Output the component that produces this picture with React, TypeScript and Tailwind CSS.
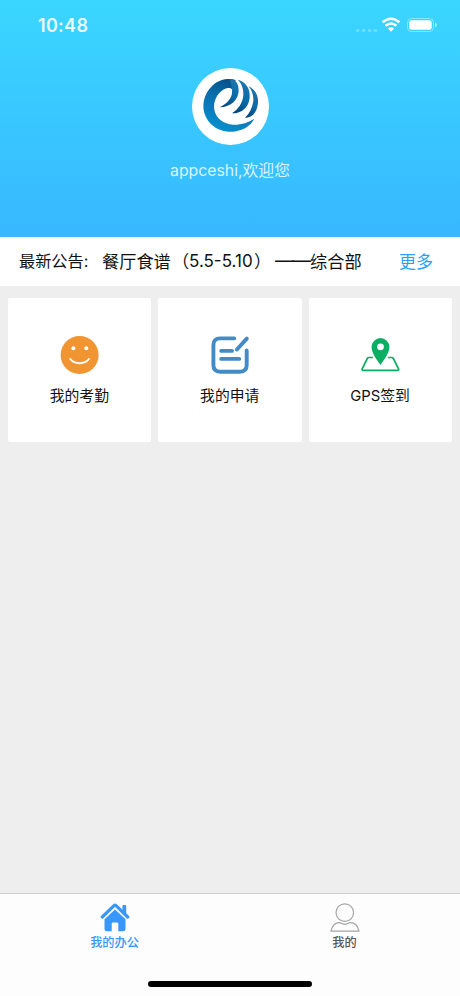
import type { ReactNode } from 'react';

function Logo() {
  return (
    <svg className="mt-[18px] h-[77px] w-[77px]" viewBox="35 23 231 231">
      <defs>
        <linearGradient id="swirl" x1="0.7" y1="0" x2="0.3" y2="1">
          <stop offset="0" stopColor="#064b82" />
          <stop offset="0.45" stopColor="#086fae" />
          <stop offset="1" stopColor="#0a91cf" />
        </linearGradient>
        <linearGradient id="feather" x1="0.6" y1="0" x2="0.3" y2="1">
          <stop offset="0" stopColor="#1c76ad" />
          <stop offset="0.55" stopColor="#0a6ba8" />
          <stop offset="1" stopColor="#064779" />
        </linearGradient>
      </defs>
      <circle cx="150.5" cy="138.5" r="115.5" fill="#fff" />
      <path
        d="M166 59C147 53 117 56 96 76C70 100 61 139 77 171C92 201 124 217 157 214C187 211 211 197 222 175C204 187 181 194 158 193C130 190 107 175 102 148C98 124 110 99 131 87C141 82 150 82 155 87Z"
        fill="url(#swirl)"
      />
      <path d="M148 56C168 58 175 71 175 91C174 118 153 139 118 141C138 131 153 116 155 98C157 84 152 70 148 56Z" fill="url(#feather)" />
      <path d="M172 58C198 65 210 86 208 112C205 140 186 159 155 159C175 146 187 127 189 105C190 85 184 69 172 58Z" fill="url(#feather)" />
      <path d="M205 78C226 88 237 110 232 134C228 159 213 174 194 172C208 159 216 142 219 122C220 105 214 89 205 78Z" fill="url(#feather)" />
    </svg>
  );
}

function StatusBar() {
  return (
    <div className="flex h-[50px] w-full items-center justify-between pl-[38px] pr-[23px]">
      <span className="font-['Inter'] text-[18px] font-semibold tracking-[0.3px] text-[#e9fbff]">10:48</span>
      <svg className="h-[16px] w-[83px]" viewBox="0 0 83 16">
        <g fill="#fff" opacity="0.25">
          <rect x="2" y="12" width="3.4" height="3" rx="1" />
          <rect x="8" y="12" width="3.4" height="3" rx="1" />
          <rect x="14" y="12" width="3.4" height="3" rx="1" />
          <rect x="19.6" y="12" width="3.4" height="3" rx="1" />
        </g>
        <g fill="none" stroke="#fff" strokeWidth="2.5">
          <path d="M28.6 5.3Q37 -1.9 45.4 5.3" />
          <path d="M31.6 8.8Q37 4.2 42.4 8.8" />
        </g>
        <path d="M34 11.4Q37 8.9 40 11.4L37 14.8Z" fill="#fff" />
        <rect x="53.5" y="1.5" width="26" height="13" rx="4" fill="none" stroke="#fff" opacity="0.4" />
        <rect x="55.3" y="3.3" width="22.4" height="9.4" rx="2.3" fill="#fff" />
        <path d="M81 5.5Q83 6.2 83 8Q83 9.8 81 10.5Z" fill="#fff" opacity="0.5" />
      </svg>
    </div>
  );
}

function SmileIcon() {
  return (
    <svg className="h-[40px] w-[40px]" viewBox="0 0 40 40">
      <circle cx="19.6" cy="20" r="19" fill="#f19532" />
      <circle cx="13.4" cy="13.2" r="2" fill="#fff" />
      <circle cx="26.3" cy="13.2" r="2" fill="#fff" />
      <path d="M10.3 24C14.6 29.6 24.6 29.6 28.9 24" fill="none" stroke="#fff" strokeWidth="2" strokeLinecap="round" />
    </svg>
  );
}

function FormIcon() {
  return (
    <svg className="h-[40px] w-[40px]" viewBox="0 0 40 40" fill="none" stroke="#438bc7" strokeWidth="3.9" strokeLinecap="round">
      <path d="M24.2 3.4H10Q3.4 3.4 3.4 10V30Q3.4 36.7 10 36.7H30Q36.7 36.7 36.7 30V15.5" />
      <path d="M11.2 15.9H22M11.2 23.9H29.2M26.9 14.5L36.8 3.6" />
    </svg>
  );
}

function PinIcon() {
  return (
    <svg className="h-[40px] w-[40px]" viewBox="0 0 40 40">
      <path d="M12.9 22.5H9Q7.8 22.5 7.3 23.5L2.2 33.8Q1.6 35.3 3.2 35.3H37.4Q39.2 35.3 38.5 33.8L33.4 23.5Q32.9 22.5 31.7 22.5H27.9" fill="none" stroke="#0bae62" strokeWidth="1.7" />
      <path d="M20.4 30C17.7 25.8 11.6 18.8 11.6 12A8.9 8.9 0 0 1 29.4 12C29.4 18.8 23.1 25.8 20.4 30Z" fill="#0bae62" />
      <circle cx="20.5" cy="11.8" r="3.4" fill="#fff" />
    </svg>
  );
}

function HomeIcon() {
  return (
    <svg className="h-[29px] w-[30px]" viewBox="0 0 30 29" fill="#3797fa">
      <path d="M22.4 3Q22.4 2 23.4 2H25.2Q26.2 2 26.2 3V13L22.4 10Z" />
      <path d="M2.3 14L14 2.7Q15 1.8 16 2.7L27.7 14" fill="none" stroke="#3797fa" strokeWidth="3.2" strokeLinecap="round" />
      <path d="M4.5 16.3L15 6.6L25.5 16.3V26Q25.5 28.3 23.2 28.3H18.3V20.5Q18.3 19.4 17.2 19.4H12.8Q11.7 19.4 11.7 20.5V28.3H6.8Q4.5 28.3 4.5 26Z" />
    </svg>
  );
}

function PersonIcon() {
  return (
    <svg className="h-[29px] w-[30px]" viewBox="0 0 30 29" fill="none" stroke="#a2a4a6" strokeWidth="1.2">
      <circle cx="14.8" cy="9.6" r="8.8" />
      <path d="M1 28.2C1.7 23 5.2 19.7 9.2 19.7C11.2 19.7 12.7 21.4 14.8 21.4C17 21.4 18.5 19.7 20.5 19.7C24.7 19.7 28.2 23 28.9 28.2Z" />
    </svg>
  );
}

function Card({ icon, label }: { icon: ReactNode; label: string }) {
  return (
    <button className="flex h-[144px] min-w-0 flex-1 flex-col items-center rounded-[2px] bg-white pt-[37px]">
      {icon}
      <span className="mt-[9px] pr-[0.6px] text-[14.8px] leading-[24px] text-[#111]">{label}</span>
    </button>
  );
}

export default function App() {
  return (
    <div className="flex h-[996px] w-[460px] flex-col overflow-hidden bg-[#eee] font-['Inter','Noto_Sans_CJK_SC',sans-serif]">
      <header className="flex h-[237px] shrink-0 flex-col items-center bg-linear-to-b from-[#3ad6ff] to-[#38b8ff]">
        <StatusBar />
        <Logo />
        <p className="mt-[14px] text-[15.8px] leading-[24px] text-[#d9f4ff]">appceshi,欢迎您</p>
      </header>
      <section className="flex h-[49px] shrink-0 items-center whitespace-nowrap bg-white text-[17.2px] text-[#111]">
        <span className="ml-[19px] w-[83px] text-[16.2px]">最新公告:</span>
        <span className="w-[70px]">餐厅食谱</span>
        <span className="w-[17px]">（</span>
        <span className="w-[65px] text-[17px]">5.5-5.10</span>
        <span className="w-[21px]">）</span>
        <span className="w-[35px] text-[19px] tracking-[-1.9px]">——</span>
        <span>综合部</span>
        <a className="ml-auto mr-[27px] pt-[2px] text-[17px] text-[#2b9ff5]">更多</a>
      </section>
      <main className="flex flex-1 items-start gap-[7px] px-[8px] pt-[12px]">
        <Card icon={<SmileIcon />} label="我的考勤" />
        <Card icon={<FormIcon />} label="我的申请" />
        <Card icon={<PinIcon />} label="GPS签到" />
      </main>
      <footer className="flex h-[103px] shrink-0 flex-col border-t border-[#cfcfcf] bg-[#fdfdfd]">
        <nav className="flex h-[87px] pt-[9px] text-[12.2px] font-medium leading-[18px]">
          <a className="flex flex-1 flex-col items-center gap-[2px] text-[#3797fa]">
            <HomeIcon />
            <span className="mr-[1px]">我的办公</span>
          </a>
          <a className="flex flex-1 flex-col items-center gap-[2px] text-[#555]">
            <PersonIcon />
            <span className="mr-[1px]">我的</span>
          </a>
        </nav>
        <div className="mx-auto h-[6px] w-[164px] shrink-0 rounded-full bg-black" />
      </footer>
    </div>
  );
}
